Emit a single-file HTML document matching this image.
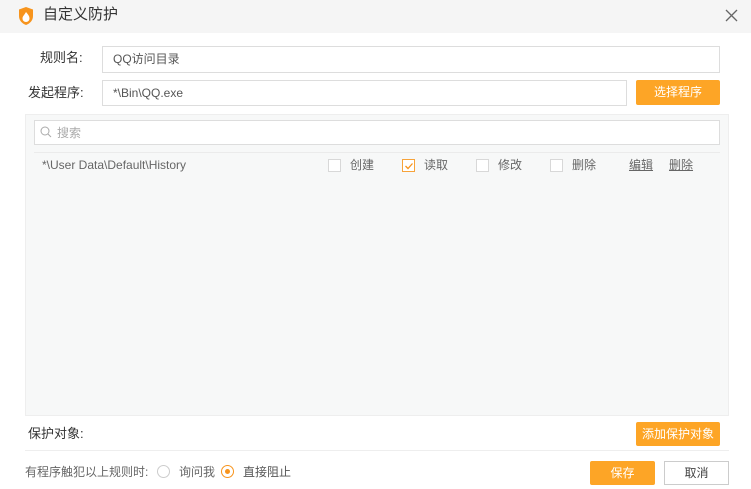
<!DOCTYPE html><html><head><meta charset="utf-8"><style>
*{margin:0;padding:0;box-sizing:border-box}
body{width:751px;height:489px;background:#fff;font-family:"Liberation Sans","Noto Sans CJK SC",sans-serif;font-size:12px;line-height:16px;color:#333;position:relative;overflow:hidden}
.a{position:absolute}
.inp{position:absolute;border:1px solid #ddd;background:#fff;padding-left:10px;line-height:24px;color:#555}
.btn{position:absolute;background:#fda526;color:#fff;text-align:center;border-radius:2px;font-size:12px}
.cb{position:absolute;width:13px;height:13px;border:1px solid #d8d8d8;background:#fff;top:159px}
.lab{position:absolute;top:157px;color:#666}
</style></head><body>
<div class="a" style="left:0;top:0;width:751px;height:33px;background:#f5f5f5"></div>
<svg class="a" style="left:17px;top:6px" width="18" height="20" viewBox="0 0 18 20"><path d="M9 1L2 3.5V10c0 4.5 3 7.5 7 9 4-1.5 7-4.5 7-9V3.5z" fill="#f7941d"/><path d="M9 6c2 2.5 3.5 4 3.5 6.5A3.5 3.5 0 0 1 5.5 12.5C5.5 10 7.5 9 9 6z" fill="#fff"/></svg>
<div class="a" style="left:43px;top:6px;font-size:15px;line-height:18px;color:#333">自定义防护</div>
<svg class="a" style="left:725px;top:9px" width="13" height="13"><path d="M1 1L12 12M12 1L1 12" stroke="#666" stroke-width="1.3"/></svg>
<div class="a" style="left:40px;top:50px;font-size:13px">规则名:</div>
<div class="inp" style="left:102px;top:46px;width:618px;height:27px">QQ访问目录</div>
<div class="a" style="left:28px;top:85px;font-size:13px">发起程序:</div>
<div class="inp" style="left:102px;top:80px;width:525px;height:26px">*\Bin\QQ.exe</div>
<div class="btn" style="left:636px;top:80px;width:84px;height:25px;line-height:25px">选择程序</div>
<div class="a" style="left:25px;top:114px;width:704px;height:302px;background:#f7f8f8;border:1px solid #eee"></div>
<div class="inp" style="left:34px;top:120px;width:686px;height:25px;padding-left:22px;color:#aaa">搜索</div>
<svg class="a" style="left:40px;top:126px" width="12" height="12"><circle cx="5" cy="5" r="4" fill="none" stroke="#aaa"/><path d="M8 8L11 11" stroke="#aaa"/></svg>
<div class="a" style="left:34px;top:152px;width:686px;height:1px;background:#ebebeb"></div>
<div class="a" style="left:42px;top:157px;color:#666">*\User Data\Default\History</div>
<div class="cb" style="left:328px"></div><div class="lab" style="left:350px">创建</div>
<div class="cb" style="left:402px;border-color:#f7a33a"></div>
<svg class="a" style="left:404px;top:161px" width="10" height="10"><path d="M1.5 5L4 7.5L8.5 2.5" fill="none" stroke="#f7941d" stroke-width="1.3"/></svg>
<div class="lab" style="left:424px">读取</div>
<div class="cb" style="left:476px"></div><div class="lab" style="left:498px">修改</div>
<div class="cb" style="left:550px"></div><div class="lab" style="left:572px">删除</div>
<div class="lab" style="left:629px;text-decoration:underline">编辑</div>
<div class="lab" style="left:669px;text-decoration:underline">删除</div>
<div class="a" style="left:28px;top:426px;font-size:13px">保护对象:</div>
<div class="btn" style="left:636px;top:422px;width:84px;height:24px;line-height:24px">添加保护对象</div>
<div class="a" style="left:25px;top:450px;width:704px;height:1px;background:#eee"></div>
<div class="a" style="left:25px;top:464px;color:#666">有程序触犯以上规则时:</div>
<div class="a" style="left:157px;top:465px;width:13px;height:13px;border:1px solid #ccc;border-radius:50%"></div>
<div class="a" style="left:179px;top:464px;color:#666">询问我</div>
<div class="a" style="left:221px;top:465px;width:13px;height:13px;border:1px solid #f7941d;border-radius:50%"></div>
<div class="a" style="left:225px;top:469px;width:5px;height:5px;background:#f7941d;border-radius:50%"></div>
<div class="a" style="left:243px;top:464px;color:#555">直接阻止</div>
<div class="btn" style="left:590px;top:461px;width:65px;height:24px;line-height:24px">保存</div>
<div class="a" style="left:664px;top:461px;width:65px;height:24px;line-height:22px;border:1px solid #ccc;text-align:center;color:#444">取消</div>
</body></html>
